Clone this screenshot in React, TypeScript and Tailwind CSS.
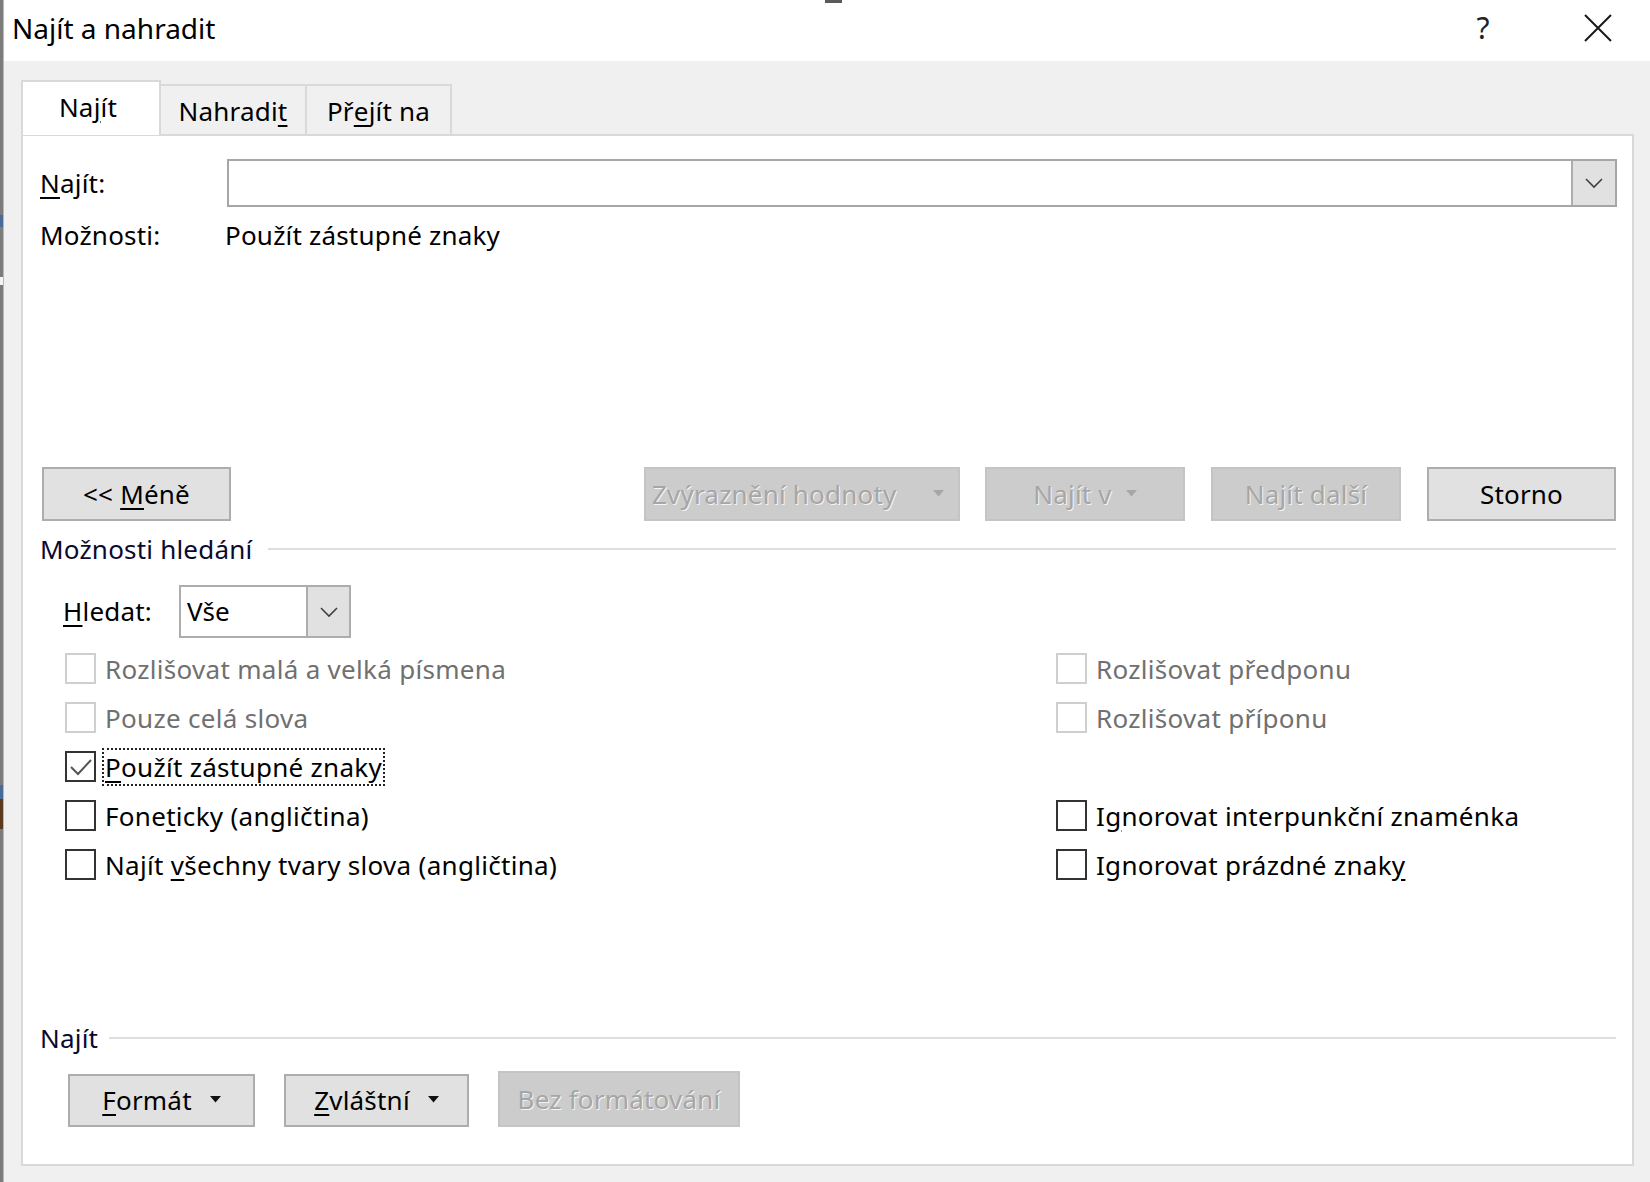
import React from "react";

const FONT = { fontFamily: '"Noto Sans", "Open Sans", sans-serif' };

function Chevron() {
  return (
    <svg width="20" height="12" viewBox="0 0 20 12" fill="none">
      <path d="M2 2 L10 10 L18 2" stroke="#404040" strokeWidth="1.6" />
    </svg>
  );
}

function Caret({ color }: { color: string }) {
  return (
    <svg width="11" height="7" viewBox="0 0 11 7">
      <path d="M0 0 H11 L5.5 6.5 Z" fill={color} />
    </svg>
  );
}

function Btn({
  children,
  w,
  disabled = false,
}: {
  children: React.ReactNode;
  w: string;
  disabled?: boolean;
}) {
  return (
    <div
      className={
        w +
        " h-[54px] flex items-center justify-center border-2 text-[26px] tracking-[0.2px] " +
        (disabled
          ? "bg-[#cccccc] border-[#c4c4c4] text-[#a6a6a6] [text-shadow:1px_1px_0_#f4f4f4]"
          : "bg-[#e1e1e1] border-[#adadad] text-black")
      }
    >
      {children}
    </div>
  );
}

function Check({
  label,
  disabled = false,
  checked = false,
  focused = false,
}: {
  label: React.ReactNode;
  disabled?: boolean;
  checked?: boolean;
  focused?: boolean;
}) {
  return (
    <div className="h-[49px] flex items-center">
      <div
        className={
          "w-[31px] h-[31px] border-2 bg-white flex items-center justify-center " +
          (disabled ? "border-[#cfcfcf]" : "border-[#333333]")
        }
      >
        {checked && (
          <svg width="24" height="20" viewBox="0 0 24 20" fill="none">
            <path d="M2 10 L9 17 L22 3" stroke="#555555" strokeWidth="2" />
          </svg>
        )}
      </div>
      <div
        className={
          "ml-[8px] text-[26px] tracking-[0.3px] leading-[34px] px-[1px] " +
          (disabled ? "text-[#707070]" : "text-black") +
          (focused ? " outline-2 outline-dotted outline-[#222]" : "")
        }
      >
        {label}
      </div>
    </div>
  );
}

function GroupLabel({ text, lineFrom }: { text: string; lineFrom: string }) {
  return (
    <div className="h-[34px] flex items-center">
      <span className={"text-[26px] tracking-[0.2px] text-[#0a0a30] " + lineFrom}>{text}</span>
      <div className="flex-1 h-[2px] bg-[#dedede] mr-[16px]" />
    </div>
  );
}

export default function App() {
  return (
    <div
      className="w-[1650px] h-[1182px] relative overflow-hidden flex bg-white"
      style={FONT}
    >
      {/* desktop peeking past the window edge */}
      <div className="w-[3px] h-full bg-[#7c7c7c] flex flex-col">
        <div className="h-[215px]" />
        <div className="h-[12px] bg-[#4a6a9a]" />
        <div className="h-[50px]" />
        <div className="h-[8px] bg-[#f4f4f4]" />
        <div className="h-[500px]" />
        <div className="h-[14px] bg-[#4a6a9a]" />
        <div className="h-[30px] bg-[#5a3a20]" />
      </div>
      <div className="w-[1px] h-full bg-[#b8b8b8]" />

      {/* small mark on the top edge */}
      <div className="absolute left-[825px] top-0 w-[17px] h-[3px] bg-[#5a5a5a]" />

      <div className="flex-1 flex flex-col">
        {/* title bar */}
        <div className="h-[61px] flex items-center bg-white">
          <div className="pl-[8px] text-[28px] text-black leading-none pb-[6px]">
            Najít a nahradit
          </div>
          <div className="flex-1" />
          <div className="text-[30px] text-[#222] w-[40px] text-center pb-[6px]">?</div>
          <div className="w-[81px]" />
          <svg width="28" height="28" viewBox="0 0 28 28" className="mb-[6px]">
            <path d="M1 1 L27 27 M27 1 L1 27" stroke="#1a1a1a" strokeWidth="2" />
          </svg>
          <div className="w-[38px]" />
        </div>

        {/* dialog body */}
        <div className="flex-1 bg-[#f0f0f0] pl-[17px] pt-[19px]">
          {/* tabs */}
          <div className="flex items-end h-[54px] relative z-10 text-[26px] tracking-[0.2px]">
            <div className="w-[140px] h-[55px] -mb-[1px] bg-white border-2 border-b-0 border-[#d9d9d9] flex items-center justify-center pb-[2px] pr-[6px]">
              Na<u className="underline-offset-4">j</u>ít
            </div>
            <div className="w-[146px] h-[50px] bg-[#f0f0f0] border-2 border-l-0 border-b-0 border-[#d9d9d9] flex items-center justify-center pt-[3px]">
              Nahradi<u className="underline-offset-4">t</u>
            </div>
            <div className="w-[145px] h-[50px] bg-[#f0f0f0] border-2 border-l-0 border-b-0 border-[#d9d9d9] flex items-center justify-center pt-[3px]">
              Př<u className="underline-offset-4">e</u>jít na
            </div>
          </div>

          {/* tab page */}
          <div className="w-[1613px] h-[1032px] bg-white border-2 border-[#d9d9d9] flex flex-col pl-[17px] text-black">
            <div className="mt-[23px] flex items-center h-[48px]">
              <div className="w-[187px] text-[26px] tracking-[0.2px]">
                <u className="underline-offset-4">N</u>ajít:
              </div>
              <div className="w-[1390px] h-[48px] border-2 border-[#a6a6a6] bg-white flex justify-end">
                <div className="w-[44px] h-full bg-[#e1e1e1] border-l-2 border-[#adadad] flex items-center justify-center">
                  <Chevron />
                </div>
              </div>
            </div>

            <div className="mt-[11px] flex items-center h-[34px] text-[26px] tracking-[0.2px]">
              <div className="w-[185px]">Možnosti:</div>
              <div>Použít zástupné znaky</div>
            </div>

            <div className="mt-[215px] flex items-center pl-[2px]">
              <Btn w="w-[189px]">
                &lt;&lt;&nbsp;<u className="underline-offset-4">M</u>éně
              </Btn>
              <div className="flex-1" />
              <Btn w="w-[316px]" disabled>
                <span className="flex-1 pl-[6px]">Zvýraznění hodnoty</span>
                <span className="pr-[14px] pb-[2px]">
                  <Caret color="#a6a6a6" />
                </span>
              </Btn>
              <div className="w-[25px]" />
              <Btn w="w-[200px]" disabled>
                Najít v
                <span className="ml-[14px] pb-[2px]">
                  <Caret color="#a6a6a6" />
                </span>
              </Btn>
              <div className="w-[26px]" />
              <Btn w="w-[190px]" disabled>
                Najít další
              </Btn>
              <div className="w-[26px]" />
              <Btn w="w-[189px]">Storno</Btn>
              <div className="w-[16px]" />
            </div>

            <div className="mt-[11px]">
              <GroupLabel text="Možnosti hledání" lineFrom="mr-[16px]" />
            </div>

            <div className="mt-[19px] flex items-center pl-[23px] h-[53px]">
              <div className="w-[116px] text-[26px] tracking-[0.2px]">
                <u className="underline-offset-4">H</u>ledat:
              </div>
              <div className="w-[172px] h-[53px] border-2 border-[#adadad] bg-white flex">
                <div className="flex-1 flex items-center pl-[6px] text-[26px]">Vše</div>
                <div className="w-[43px] h-full bg-[#e1e1e1] border-l-2 border-[#adadad] flex items-center justify-center">
                  <Chevron />
                </div>
              </div>
            </div>

            <div className="mt-[6px] grid grid-cols-[991px_1fr] pl-[25px]">
              <Check label="Rozlišovat malá a velká písmena" disabled />
              <Check label="Rozlišovat předponu" disabled />
              <Check label="Pouze celá slova" disabled />
              <Check label="Rozlišovat příponu" disabled />
              <Check
                label={
                  <>
                    <u className="underline-offset-4">P</u>oužít zástupné znaky
                  </>
                }
                checked
                focused
              />
              <div className="h-[49px]" />
              <Check
                label={
                  <>
                    Fone<u className="underline-offset-4">t</u>icky (angličtina)
                  </>
                }
              />
              <Check
                label={
                  <>
                    I<u className="underline-offset-4">g</u>norovat interpunkční znaménka
                  </>
                }
              />
              <Check
                label={
                  <>
                    Najít <u className="underline-offset-4">v</u>šechny tvary slova (angličtina)
                  </>
                }
              />
              <Check
                label={
                  <>
                    Ignorovat prázdné znak<u className="underline-offset-4">y</u>
                  </>
                }
              />
            </div>

            <div className="mt-[132px]">
              <GroupLabel text="Najít" lineFrom="mr-[11px]" />
            </div>

            <div className="mt-[16px] flex items-end pl-[28px]">
              <Btn w="w-[187px] !h-[53px]">
                <u className="underline-offset-4">F</u>ormát
                <span className="ml-[18px] pb-[2px]">
                  <Caret color="#111" />
                </span>
              </Btn>
              <div className="w-[29px]" />
              <Btn w="w-[185px] !h-[53px]">
                <u className="underline-offset-4">Z</u>vláštní
                <span className="ml-[18px] pb-[2px]">
                  <Caret color="#111" />
                </span>
              </Btn>
              <div className="w-[29px]" />
              <Btn w="w-[242px] !h-[56px]" disabled>
                Bez formátování
              </Btn>
            </div>
          </div>
        </div>
      </div>
    </div>
  );
}
